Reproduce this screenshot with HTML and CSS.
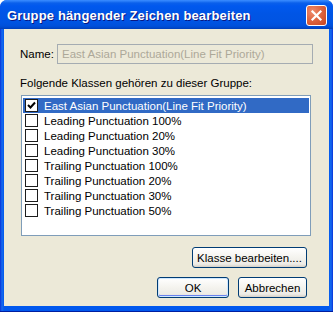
FILE: index.html
```html
<!DOCTYPE html>
<html>
<head>
<meta charset="utf-8">
<link rel="stylesheet" href="styles.css">
</head>
<body>
<div class="window">
  <div class="titlebar">
    <span class="title">Gruppe hängender Zeichen bearbeiten</span>
    <div class="close">
      <svg width="13" height="13" viewBox="0 0 13 13"><path d="M2.5 2.5 L10.5 10.5 M10.5 2.5 L2.5 10.5" stroke="#fff" stroke-width="2.2" stroke-linecap="square"/></svg>
    </div>
  </div>
  <div class="content">
    <div class="name-row">
      <span class="label">Name:</span>
      <div class="input">East Asian Punctuation(Line Fit Priority)</div>
    </div>
    <div class="caption">Folgende Klassen gehören zu dieser Gruppe:</div>
    <div class="listbox">
      <div class="row selected"><span class="cb checked"><svg width="11" height="11" viewBox="0 0 11 11"><path d="M2 5 L4.5 7.5 L9 2.5" stroke="#000" stroke-width="2" fill="none"/></svg></span><span>East Asian Punctuation(Line Fit Priority)</span></div>
      <div class="row"><span class="cb"></span><span>Leading Punctuation 100%</span></div>
      <div class="row"><span class="cb"></span><span>Leading Punctuation 20%</span></div>
      <div class="row"><span class="cb"></span><span>Leading Punctuation 30%</span></div>
      <div class="row"><span class="cb"></span><span>Trailing Punctuation 100%</span></div>
      <div class="row"><span class="cb"></span><span>Trailing Punctuation 20%</span></div>
      <div class="row"><span class="cb"></span><span>Trailing Punctuation 30%</span></div>
      <div class="row"><span class="cb"></span><span>Trailing Punctuation 50%</span></div>
    </div>
    <div class="btn-row single">
      <button class="btn wide">Klasse bearbeiten....</button>
    </div>
    <div class="btn-row">
      <button class="btn default">OK</button>
      <button class="btn">Abbrechen</button>
    </div>
  </div>
</div>
</body>
</html>
```
FILE: styles.css
```css
html, body {
  margin: 0;
  padding: 0;
  background: #ffffff;
}
body {
  width: 333px;
  height: 312px;
  overflow: hidden;
  font-family: "Liberation Sans", Arial, sans-serif;
  font-size: 11.5px;
  color: #000;
}
.window {
  width: 333px;
  height: 312px;
  box-sizing: border-box;
  background: linear-gradient(to right, #0831D9 0, #166AEE 2px, #0058EE 4px, #0058EE 329px, #166AEE 331px, #0831D9 333px);
  border-radius: 7px 7px 0 0;
  display: flex;
  flex-direction: column;
  padding: 0 4px 5px 4px;
  border-bottom: 1px solid #001EA0;
}
.titlebar {
  height: 29px;
  margin: 0 -4px;
  border-radius: 7px 7px 0 0;
  background: linear-gradient(to bottom, #3A8CFF 0, #2D80FA 1px, #0A5FEB 3px, #0058EE 6px, #0055E5 14px, #0054E3 22px, #0050DA 26px, #0046C8 28px, #003DB4 29px);
  display: flex;
  align-items: center;
  justify-content: space-between;
  padding: 0 6px 0 7px;
  box-sizing: border-box;
  flex: none;
}
.title {
  color: #fff;
  font-weight: bold;
  font-size: 13px;
  letter-spacing: 0.15px;
  text-shadow: 1px 1px 0 #0A1883;
  padding-top: 1px;
}
.close {
  width: 19px;
  height: 19px;
  border: 1px solid #fff;
  border-radius: 3px;
  background: radial-gradient(circle at 30% 30%, #EF8C6E 0, #E06A46 40%, #C9441E 100%);
  display: flex;
  align-items: center;
  justify-content: center;
  margin-top: 1px;
}
.close svg { display: block; }
.content {
  flex: 1;
  background: #ECE9D8;
  padding: 15px 18px 0 16px;
  display: flex;
  flex-direction: column;
}
.name-row {
  display: flex;
  align-items: center;
  height: 20px;
}
.label {
  width: 37px;
  flex: none;
}
.input {
  flex: 1;
  height: 20px;
  box-sizing: border-box;
  border: 1px solid #A5ACB2;
  color: #ACA899;
  padding: 3px 0 0 4px;
  line-height: 13px;
  margin-right: -2px;
}
.caption {
  margin-top: 12px;
  line-height: 14px;
}
.listbox {
  margin-top: 5px;
  margin-left: 1px;
  height: 141px;
  box-sizing: border-box;
  border: 1px solid #7F9DB9;
  background: #fff;
  padding: 2px 1px 0 1px;
}
.row {
  height: 15px;
  display: flex;
  align-items: center;
  padding-left: 2px;
}
.row.selected {
  background: #316AC5;
  color: #fff;
}
.cb {
  width: 13px;
  height: 13px;
  box-sizing: border-box;
  border: 1px solid #1C1C1C;
  background: #fff;
  margin-right: 6px;
  flex: none;
  display: flex;
  align-items: center;
  justify-content: center;
}
.cb svg { display: block; }
.btn-row {
  display: flex;
  justify-content: flex-end;
  gap: 9px;
  margin-top: 9px;
  margin-right: 4px;
}
.btn-row.single {
  margin-top: 11px;
}
.btn {
  font-family: "Liberation Sans", Arial, sans-serif;
  font-size: 11.5px;
  color: #000;
  height: 21px;
  width: 69px;
  padding: 0;
  border: 1px solid #003C74;
  border-radius: 3px;
  background: linear-gradient(to bottom, #FFFFFF 0, #F4F3EE 50%, #ECEBE6 85%, #D6D0C5 100%);
  box-sizing: border-box;
}
.btn.wide {
  width: 115px;
}
.btn.default {
  width: 72px;
  box-shadow: inset 0 0 0 1px #CEE7FF, inset 0 -1px 0 1px #6982EE;
}
```
